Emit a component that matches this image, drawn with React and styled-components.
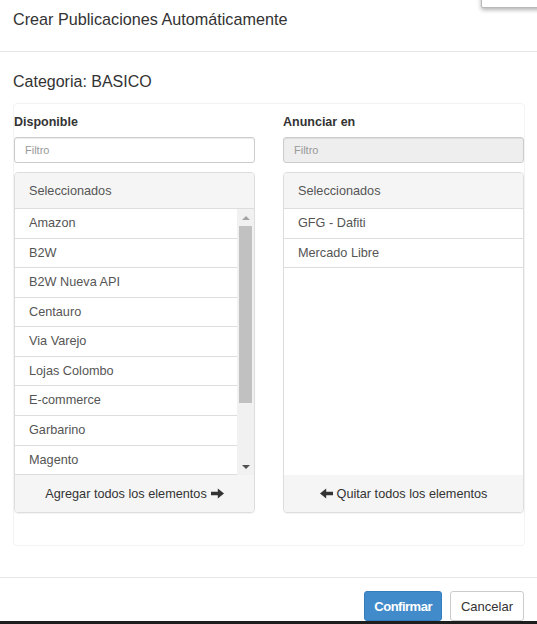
import React from 'react';
import styled, { createGlobalStyle } from 'styled-components';

const GlobalStyle = createGlobalStyle`
  html, body {
    margin: 0;
    padding: 0;
    background: #ffffff;
  }
  body {
    font-family: "Liberation Sans", Arial, Helvetica, sans-serif;
    color: #333;
  }
  * {
    box-sizing: border-box;
  }
`;

const Page = styled.div`
  position: relative;
  width: 537px;
  height: 624px;
  overflow: hidden;
  background: #fff;
  display: flex;
  flex-direction: column;
`;

const CornerTab = styled.div`
  position: absolute;
  top: -20px;
  left: 481px;
  width: 70px;
  height: 28px;
  background: #fff;
  border: 1px solid #b9b9b9;
  border-radius: 2px;
  box-shadow: 0 2px 4px rgba(0, 0, 0, 0.3);
`;

const Header = styled.div`
  height: 52px;
  padding: 8px 13px 0;
  border-bottom: 1px solid #e5e5e5;
`;

const Title = styled.h4`
  margin: 0;
  font-size: 16.2px;
  font-weight: normal;
  line-height: 22px;
  color: #333;
`;

const Body = styled.div`
  padding: 20px 12px 0 13px;
`;

const Category = styled.h3`
  margin: 0;
  font-size: 16px;
  font-weight: normal;
  line-height: 20px;
  color: #333;
`;

const Well = styled.div`
  margin-top: 11px;
  padding: 9px 0 32px;
  border: 1px solid #f3f3f3;
  border-radius: 4px;
  display: grid;
  grid-template-columns: 1fr 1fr;
  column-gap: 28px;
`;

const Column = styled.div`
  display: flex;
  flex-direction: column;
`;

const Label = styled.label`
  font-size: 12.5px;
  font-weight: bold;
  line-height: 18px;
  color: #333;
  margin-bottom: 6px;
`;

const Filter = styled.input`
  height: 26px;
  width: 100%;
  padding: 0 10px;
  font-family: inherit;
  font-size: 11px;
  color: #555;
  border: 1px solid #ccc;
  border-radius: 3px;
  background: ${p => (p.disabled ? '#eee' : '#fff')};
  box-shadow: inset 0 1px 1px rgba(0, 0, 0, 0.075);
  outline: none;

  &::placeholder {
    color: #999;
  }
`;

const Panel = styled.div`
  margin-top: 9px;
  border: 1px solid #ddd;
  border-radius: 4px;
  overflow: hidden;
  box-shadow: 0 1px 1px rgba(0, 0, 0, 0.05);
  display: flex;
  flex-direction: column;
`;

const PanelHeading = styled.div`
  height: 36px;
  padding: 0 14px;
  background: #f5f5f5;
  border-bottom: 1px solid #ddd;
  display: flex;
  align-items: center;
  font-size: 12.7px;
  color: #555;
`;

const ListArea = styled.div`
  height: 266px;
  display: flex;
  background: #fff;
`;

const Items = styled.ul`
  flex: 1;
  margin: 0;
  padding: 0;
  list-style: none;
  overflow: hidden;
`;

const Item = styled.li`
  padding: 5px 14px;
  font-size: 12.7px;
  line-height: 18.57px;
  color: #555;
  border-bottom: 1px solid #ddd;
  white-space: nowrap;
`;

const Scrollbar = styled.div`
  width: 17px;
  background: #f1f1f1;
  display: flex;
  flex-direction: column;
  align-items: center;
`;

const ArrowButton = styled.div`
  height: 17px;
  width: 17px;
  display: flex;
  align-items: center;
  justify-content: center;

  &::after {
    content: '';
    border-left: 4px solid transparent;
    border-right: 4px solid transparent;
    ${p =>
      p.down
        ? 'border-top: 4px solid #505050;'
        : 'border-bottom: 4px solid #a3a3a3;'}
  }
`;

const Track = styled.div`
  flex: 1;
  width: 100%;
  padding: 0 2px;
`;

const Thumb = styled.div`
  height: 177px;
  background: #c1c1c1;
`;

const PanelFooter = styled.button`
  height: 37px;
  border: none;
  background: #f5f5f5;
  font-family: inherit;
  font-size: 12.7px;
  color: #333;
  display: flex;
  align-items: center;
  justify-content: center;
  gap: 4px;
  cursor: pointer;
`;

const Arrow = ({ left }) => (
  <svg width="13" height="11" viewBox="0 0 13 11" style={left ? { transform: 'scaleX(-1)' } : undefined}>
    <path d="M0 3.8h6.8V0.4L13 5.5l-6.2 5.1V7.2H0z" fill="#333" />
  </svg>
);

const Footer = styled.div`
  margin-top: 31px;
  border-top: 1px solid #e5e5e5;
  padding: 13px 13px 0;
  display: flex;
  justify-content: flex-end;
  gap: 8px;
`;

const Button = styled.button`
  height: 30px;
  padding: 0 ${p => (p.primary ? 9 : 10)}px;
  font-family: inherit;
  font-size: 13px;
  border-radius: 3px;
  cursor: pointer;
  border: 1px solid ${p => (p.primary ? '#357ebd' : '#ccc')};
  background: ${p => (p.primary ? '#428bca' : '#fff')};
  color: ${p => (p.primary ? '#fff' : '#333')};
  font-weight: ${p => (p.primary ? 600 : 'normal')};
  letter-spacing: ${p => (p.primary ? '-0.5px' : '0')};
`;

const BottomBar = styled.div`
  margin-top: auto;
  height: 3px;
  background: #1e1e1e;
`;

const available = [
  'Amazon',
  'B2W',
  'B2W Nueva API',
  'Centauro',
  'Via Varejo',
  'Lojas Colombo',
  'E-commerce',
  'Garbarino',
  'Magento',
];

const selected = ['GFG - Dafiti', 'Mercado Libre'];

const DualList = ({ label, items, disabled, scroll, footer }) => (
  <Column>
    <Label>{label}</Label>
    <Filter placeholder="Filtro" disabled={disabled} />
    <Panel>
      <PanelHeading>Seleccionados</PanelHeading>
      <ListArea>
        <Items>
          {items.map(item => (
            <Item key={item}>{item}</Item>
          ))}
        </Items>
        {scroll && (
          <Scrollbar>
            <ArrowButton />
            <Track>
              <Thumb />
            </Track>
            <ArrowButton down />
          </Scrollbar>
        )}
      </ListArea>
      <PanelFooter>{footer}</PanelFooter>
    </Panel>
  </Column>
);

const App = () => (
  <Page>
    <GlobalStyle />
    <CornerTab />
    <Header>
      <Title>Crear Publicaciones Automáticamente</Title>
    </Header>
    <Body>
      <Category>Categoria: BASICO</Category>
      <Well>
        <DualList
          label="Disponible"
          items={available}
          scroll
          footer={
            <>
              Agregar todos los elementos <Arrow />
            </>
          }
        />
        <DualList
          label="Anunciar en"
          items={selected}
          disabled
          footer={
            <>
              <Arrow left /> Quitar todos los elementos
            </>
          }
        />
      </Well>
    </Body>
    <Footer>
      <Button primary>Confirmar</Button>
      <Button>Cancelar</Button>
    </Footer>
    <BottomBar />
  </Page>
);

export default App;
